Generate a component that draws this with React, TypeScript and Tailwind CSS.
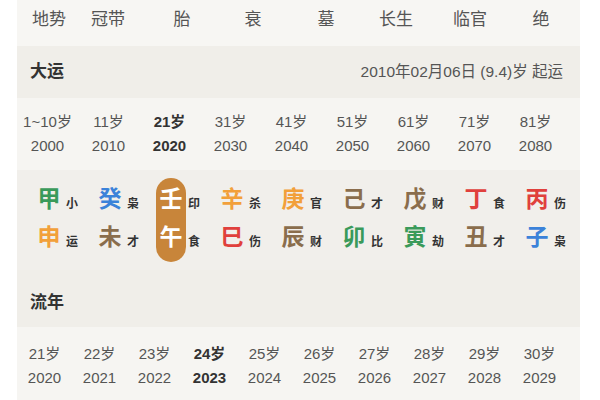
import React from "react";

const font = { fontFamily: '"Liberation Sans", "Noto Sans CJK SC", sans-serif' } as React.CSSProperties;

const topItems = ["地势", "冠带", "胎", "衰", "墓", "长生", "临官", "绝"];

const decades = [
  ["1~10岁", "2000"],
  ["11岁", "2010"],
  ["21岁", "2020"],
  ["31岁", "2030"],
  ["41岁", "2040"],
  ["51岁", "2050"],
  ["61岁", "2060"],
  ["71岁", "2070"],
  ["81岁", "2080"],
];

const G = "text-[#3a9a5a]";
const B = "text-[#3b82d9]";
const O = "text-[#f2a03a]";
const Br = "text-[#8a6d4c]";
const R = "text-[#e0403c]";

const pillars: [string, string, string, string, string, string][] = [
  ["甲", G, "小", "申", O, "运"],
  ["癸", B, "枭", "未", Br, "才"],
  ["壬", "text-white", "印", "午", "text-white", "食"],
  ["辛", O, "杀", "巳", R, "伤"],
  ["庚", O, "官", "辰", Br, "财"],
  ["己", Br, "才", "卯", G, "比"],
  ["戊", Br, "财", "寅", G, "劫"],
  ["丁", R, "食", "丑", Br, "才"],
  ["丙", R, "伤", "子", B, "枭"],
];

const years = Array.from({ length: 10 }, (_, i) => [`${21 + i}岁`, `${2020 + i}`]);

export default function App() {
  return (
    <div className="w-[600px] h-[400px] bg-white overflow-hidden" style={font}>
      <div className="ml-[17px] w-[563px]">
        {/* top row */}
        <div className="h-[46px] bg-[#f7f6f3] grid grid-cols-[64px_54px_94px_48px_98px_42px_106px_36px] items-center text-[17px] text-[#555] pb-[6px]">
          {topItems.map((t) => (
            <div key={t} className="text-center">{t}</div>
          ))}
        </div>
        {/* 大运 header */}
        <div className="h-[52px] bg-[#f0eee9] flex items-center justify-between pl-[13px] pr-[17px]">
          <div className="text-[17px] font-bold text-[#333]">大运</div>
          <div className="text-[15.5px] text-[#555]">2010年02月06日 (9.4)岁 起运</div>
        </div>
        {/* decades */}
        <div className="h-[72px] bg-[#f6f5f2] grid grid-cols-[repeat(9,61px)] content-center">
          {decades.map(([a, b], i) => (
            <div
              key={a}
              className={`flex flex-col items-center text-[15px] leading-[24px] ${i === 2 ? "font-bold text-[#333]" : "text-[#555]"}`}
            >
              <div>{a}</div>
              <div>{b}</div>
            </div>
          ))}
        </div>
        {/* pillars */}
        <div className="h-[100px] bg-[#f1efeb] grid grid-cols-[repeat(9,61px)] pt-[8px]">
          {pillars.map(([s, sc, sl, br, bc, bl], i) => (
            <div key={i} className="flex pl-[17px]">
              <div
                className={`flex flex-col items-center w-[31px] h-[84px] rounded-full ${i === 2 ? "bg-[#c8853a]" : ""}`}
              >
                <div className={`h-[42px] flex items-center text-[23px] font-bold ${sc}`}>{s}</div>
                <div className={`h-[34px] flex items-center text-[23px] font-bold ${bc}`}>{br}</div>
              </div>
              <div className="flex flex-col text-[12px] text-[#333] font-bold ml-[2px]">
                <div className="h-[42px] flex items-center pt-[10px]">{sl}</div>
                <div className="h-[34px] flex items-center pt-[10px]">{bl}</div>
              </div>
            </div>
          ))}
        </div>
        {/* 流年 header */}
        <div className="h-[57px] bg-[#f0eee9] flex items-center pl-[13px]">
          <div className="text-[17px] font-bold text-[#333] pt-[8px]">流年</div>
        </div>
        {/* years */}
        <div className="h-[80px] bg-[#f6f5f2] grid grid-cols-[repeat(10,55px)] content-start pt-[15px]">
          {years.map(([a, b], i) => (
            <div
              key={b}
              className={`flex flex-col items-center text-[15px] leading-[24px] ${i === 3 ? "font-bold text-[#333]" : "text-[#555]"}`}
            >
              <div>{a}</div>
              <div>{b}</div>
            </div>
          ))}
        </div>
      </div>
    </div>
  );
}
